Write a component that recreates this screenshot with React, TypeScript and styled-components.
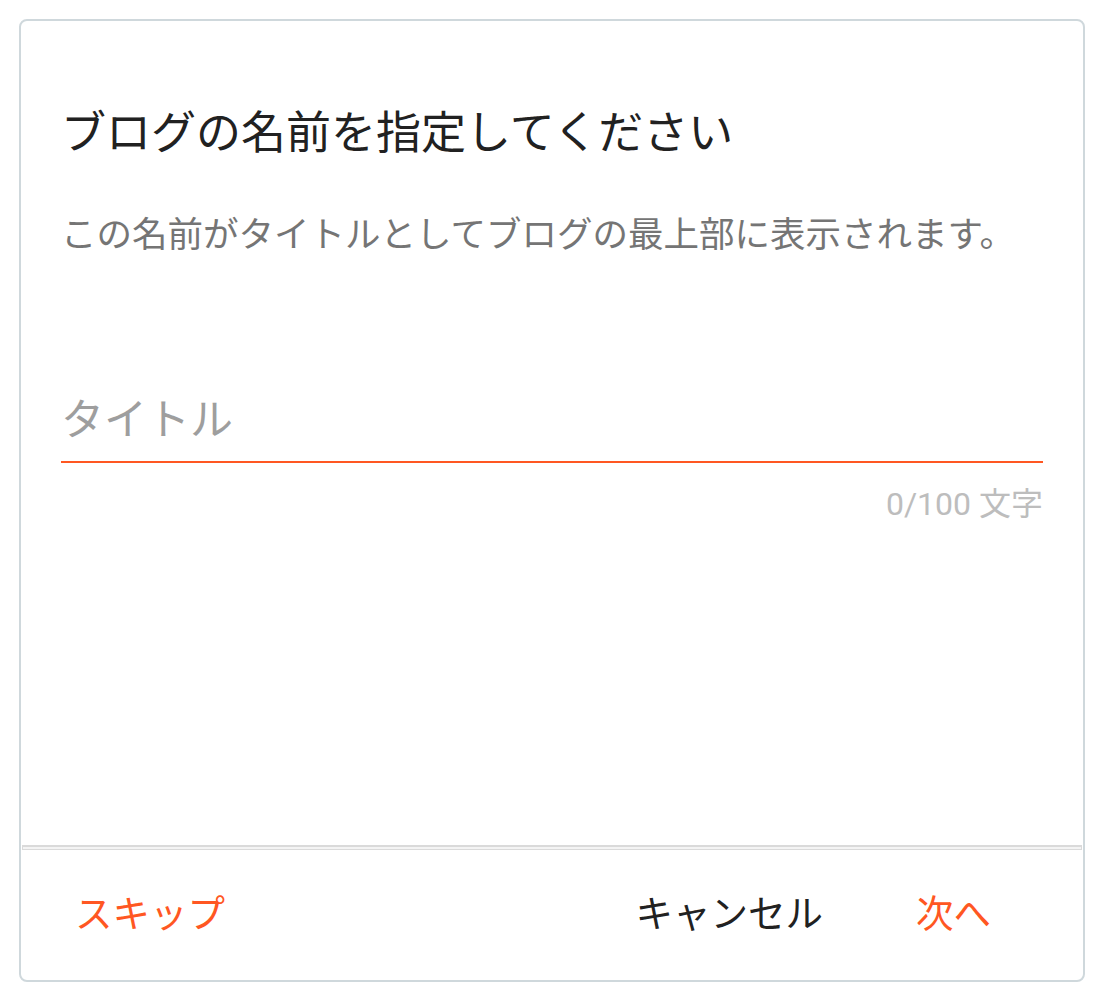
import React from "react";
import styled, { createGlobalStyle } from "styled-components";

const GlobalStyle = createGlobalStyle`
  html, body { margin: 0; padding: 0; background: #ffffff; }
  body { font-family: Roboto, "Noto Sans CJK JP", sans-serif; }
  * { box-sizing: border-box; }
`;

const Card = styled.div`
  margin: 19px 0 0 19px;
  width: 1066px;
  height: 963px;
  border: 2px solid #cfd8dc;
  border-radius: 8px;
  background: #ffffff;
  display: flex;
  flex-direction: column;
`;

const Body = styled.div`
  flex: 1;
  display: flex;
  flex-direction: column;
  padding: 79px 40px 0 40px;
`;

const Title = styled.h1`
  margin: 0;
  font-family: "Noto Sans CJK JP", sans-serif;
  font-weight: 400;
  font-size: 45px;
  line-height: 60px;
  color: #212121;
`;

const Subtitle = styled.p`
  margin: 47px 0 0 0;
  font-family: "Noto Sans CJK JP", sans-serif;
  font-size: 35.5px;
  line-height: 50px;
  color: #757575;
`;

const TitleInput = styled.input`
  margin-top: 129px;
  width: 100%;
  height: 77px;
  padding: 0 0 15px 0;
  border: none;
  border-bottom: 2px solid #ff5722;
  outline: none;
  background: transparent;
  font-family: "Noto Sans CJK JP", sans-serif;
  font-size: 43px;
  line-height: 60px;
  color: #212121;
  &::placeholder { color: #9e9e9e; }
`;

const Counter = styled.div`
  margin-top: 21px;
  text-align: right;
  font-family: Roboto, "Noto Sans CJK JP", sans-serif;
  font-size: 32px;
  line-height: 40px;
  color: #bdbdbd;
`;

const Divider = styled.hr`
  margin: 0 1px;
  height: 5px;
  border: 1px solid #dadada;
  border-width: 2px 1px 1px 1px;
  background: #f4f4f4;
`;

const Footer = styled.div`
  height: 130px;
  display: flex;
  align-items: center;
  padding: 0 76px 8px 38px;
`;

const Button = styled.button<{ $accent?: boolean }>`
  background: none;
  border: none;
  padding: 0 16px;
  font-family: "Noto Sans CJK JP", sans-serif;
  font-size: 37.5px;
  line-height: 60px;
  color: ${(p) => (p.$accent ? "#ff5722" : "#212121")};
  cursor: pointer;
`;

const Actions = styled.div`
  margin-left: auto;
  display: flex;
  gap: 61px;
`;

export default function App() {
  return (
    <>
      <GlobalStyle />
      <Card>
        <Body>
          <Title>ブログの名前を指定してください</Title>
          <Subtitle>この名前がタイトルとしてブログの最上部に表示されます。</Subtitle>
          <TitleInput placeholder="タイトル" />
          <Counter>0/100 文字</Counter>
        </Body>
        <Divider />
        <Footer>
          <Button $accent>スキップ</Button>
          <Actions>
            <Button>キャンセル</Button>
            <Button $accent>次へ</Button>
          </Actions>
        </Footer>
      </Card>
    </>
  );
}
